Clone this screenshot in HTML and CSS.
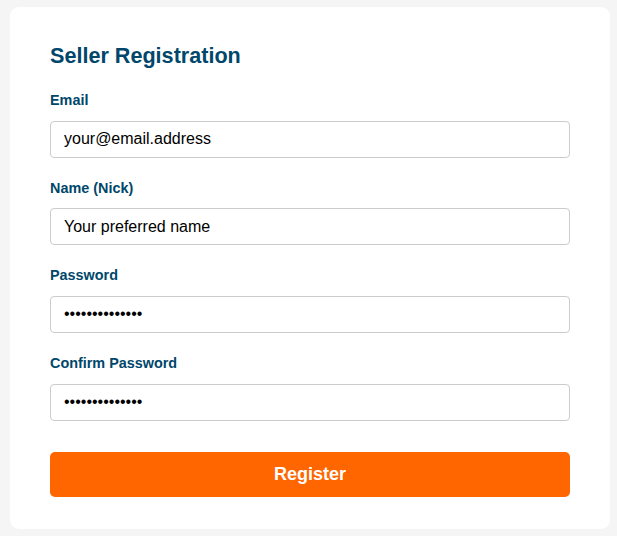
FILE: index.html
```html
<!DOCTYPE html>
<html>
  <head>
    <meta name="viewport" content="width=device-width, initial-scale=1" />
    <link rel="stylesheet" href="styles.css">
  </head>
  <body>
    <div class="container">
      <h2>Seller Registration</h2>
      <form action="/register">
        <div class="field">
          <label for="email">Email</label>
          <input type="text" id="email" name="email" value="your@email.address" />
        </div>
        <div class="field">
          <label for="nick">Name (Nick)</label>
          <input type="text" id="nick" name="nick" value="Your preferred name" />
        </div>
        <div class="field">
          <label for="password">Password</label>
          <input type="password" id="password" name="password" value="12345678901234" />
        </div>
        <div class="field">
          <label for="confirm">Confirm Password</label>
          <input type="password" id="confirm" name="confirm" value="12345678901234" />
        </div>
        <input type="submit" id="submit" value="Register" />
      </form>
    </div>
  </body>
</html>
```

FILE: styles.css
```css
* {
  box-sizing: border-box;
}

body {
  margin: 0;
  padding: 7px 7px 8px 10px;
  background-color: #f5f5f5;
  font-family: "Liberation Sans", Arial, sans-serif;
}

.container {
  width: 600px;
  background-color: #fff;
  border-radius: 9px;
  padding: 36px 40px 32px 40px;
}

h2 {
  margin: 0 0 23px 0;
  font-size: 21.6px;
  color: #00476b;
}

.field {
  margin-bottom: 22.2px;
}

label {
  display: block;
  font-size: 14.4px;
  line-height: 16.5px;
  font-weight: bold;
  color: #00476b;
  margin-bottom: 12px;
}

input[type="text"],
input[type="password"] {
  display: block;
  width: 100%;
  height: 37px;
  padding: 8px 13px;
  border: 1px solid #ccc;
  border-radius: 4px;
  font-family: "Liberation Sans", Arial, sans-serif;
  font-size: 16px;
  color: #000;
}

input[type="submit"] {
  display: block;
  width: 100%;
  height: 45px;
  margin-top: 31px;
  background-color: #ff6600;
  color: white;
  border: none;
  border-radius: 5px;
  font-family: "Liberation Sans", Arial, sans-serif;
  font-size: 18px;
  font-weight: bold;
  cursor: pointer;
}
```
